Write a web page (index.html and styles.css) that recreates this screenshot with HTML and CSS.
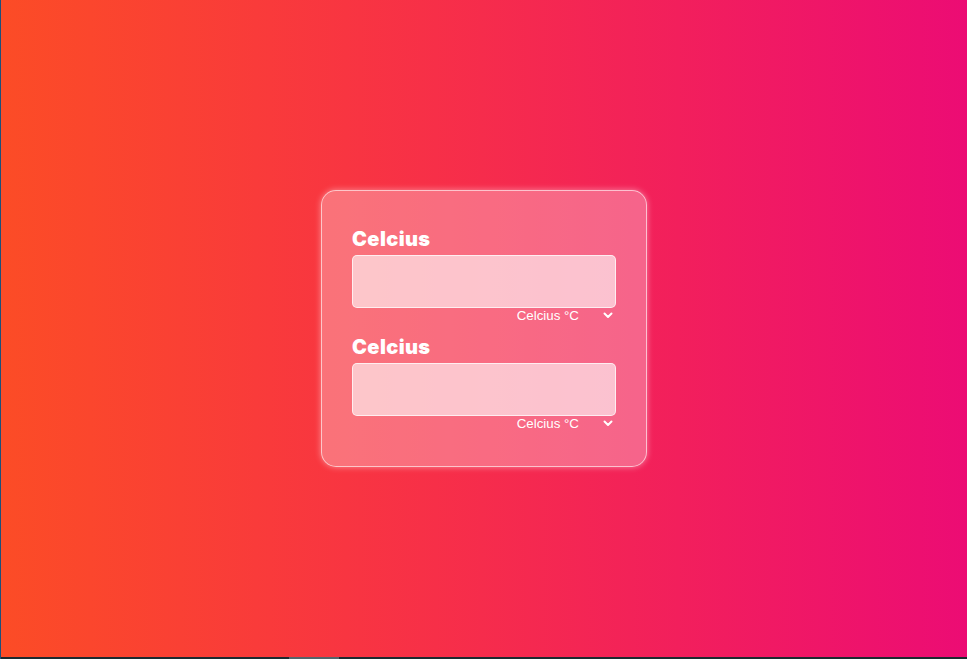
FILE: index.html
```html
<!DOCTYPE html>
<html lang="en">
<head>
<meta charset="utf-8">
<title>Temperature Converter</title>
<link rel="stylesheet" href="styles.css">
</head>
<body>
<div class="screen">
  <main class="stage">
    <section class="card">
      <div class="field">
        <h2 class="label">Celcius</h2>
        <div class="input"></div>
        <div class="unit">
          <span class="unit-text">Celcius °C</span>
          <svg class="chev" width="10" height="7" viewBox="0 0 10 7"><path d="M1.5 1.5 L5 5 L8.5 1.5" fill="none" stroke="#fff" stroke-width="2" stroke-linecap="round" stroke-linejoin="round"/></svg>
        </div>
      </div>
      <div class="field">
        <h2 class="label">Celcius</h2>
        <div class="input"></div>
        <div class="unit">
          <span class="unit-text">Celcius °C</span>
          <svg class="chev" width="10" height="7" viewBox="0 0 10 7"><path d="M1.5 1.5 L5 5 L8.5 1.5" fill="none" stroke="#fff" stroke-width="2" stroke-linecap="round" stroke-linejoin="round"/></svg>
        </div>
      </div>
    </section>
  </main>
  <div class="statusbar"><div class="thumb"></div></div>
</div>
</body>
</html>
```
FILE: styles.css
```css
* { box-sizing: border-box; }
html, body { margin: 0; padding: 0; height: 100%; }
body { font-family: "Liberation Sans", Arial, sans-serif; overflow: hidden; }
.screen {
  height: 659px;
  display: flex;
  flex-direction: column;
  border-left: 1px solid #1d4f7a;
}
.stage {
  flex: 1;
  display: flex;
  align-items: center;
  justify-content: center;
  background: linear-gradient(to right, #fc4c26 0%, #f72f48 45%, #ec0c74 100%);
}
.card {
  width: 326px;
  height: 277px;
  padding: 37px 30px 0 30px;
  border-radius: 15px;
  border: 1px solid rgba(255,255,255,0.6);
  background: rgba(255,255,255,0.3);
  box-shadow: 0 0 6px rgba(255,255,255,0.45);
  display: flex;
  flex-direction: column;
  gap: 12px;
}
.field { display: flex; flex-direction: column; }
.label {
  margin: 0 0 5px 0;
  font-family: Inter, "Noto Sans", sans-serif;
  font-weight: 900;
  font-size: 20px;
  line-height: 22px;
  color: #fff;
  letter-spacing: 0.4px;
}
.input {
  height: 53px;
  border-radius: 5px;
  border: 1px solid rgba(255,255,255,0.7);
  background: rgba(255,255,255,0.6);
}
.unit {
  display: flex;
  justify-content: flex-end;
  align-items: center;
  height: 15px;
  padding-right: 3px;
  color: #fff;
  font-size: 13.333px;
}
.unit + .x {}
.field:first-child .unit { margin-bottom: 1px; }
.unit-text { margin-right: 24px; }
.statusbar {
  height: 2px;
  background: #1d2a2f;
  position: relative;
}
.thumb {
  position: absolute;
  left: 288px;
  width: 50px;
  top: 0;
  height: 2px;
  background: #55646a;
}
```
